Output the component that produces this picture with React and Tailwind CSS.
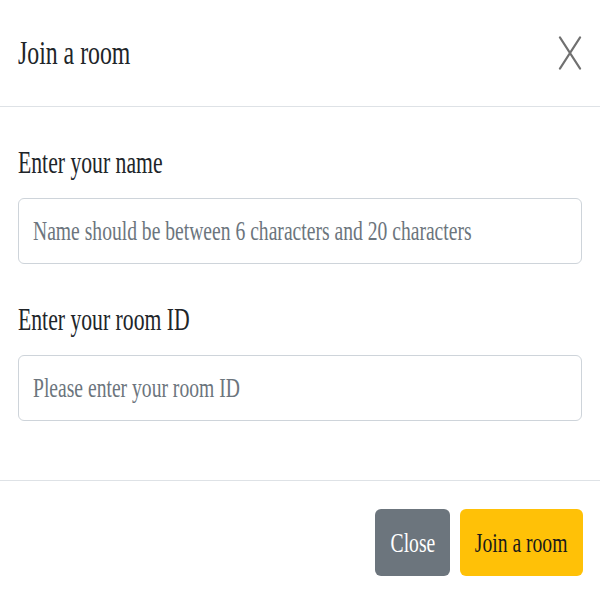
import React from "react";

// text in the shot is squeezed sideways, so every label is narrowed with scale-x
const Narrow = ({ children }) => (
  <span className="inline-block whitespace-nowrap origin-left scale-x-[0.7]">{children}</span>
);

const Field = ({ label, placeholder }) => (
  <div className="flex flex-col">
    <label className="h-[42px] flex items-center text-[31px] text-[#212529]">
      <Narrow>{label}</Narrow>
    </label>
    <div className="mt-[14px] h-[66px] rounded-[6px] border border-[#ced4da] bg-white px-[14px] flex items-center overflow-hidden">
      <input
        type="text"
        placeholder={placeholder}
        className="w-[143%] shrink-0 origin-left scale-x-[0.7] bg-transparent font-['Liberation_Serif',serif] text-[28px] text-[#212529] outline-none placeholder:text-[#6c757d]"
      />
    </div>
  </div>
);

const App = () => {
  return (
    <div className="w-[600px] h-[600px] bg-white flex flex-col font-['Liberation_Serif',serif]">
      <div className="h-[107px] shrink-0 border-b border-[#dee2e6] px-[18px] flex items-center justify-between">
        <h5 className="text-[34px] text-[#212529] leading-none">
          <Narrow>Join a room</Narrow>
        </h5>
        <button className="w-[24px] h-[34px] flex items-center justify-center">
          <svg width="24" height="34" viewBox="0 0 24 34" fill="none">
            <path d="M2 1.5 L22 32.5 M22 1.5 L2 32.5" stroke="#707070" strokeWidth="2.3" strokeLinecap="round" />
          </svg>
        </button>
      </div>

      <div className="flex-1 px-[18px] pt-[35px] flex flex-col gap-[35px]">
        <Field label="Enter your name" placeholder="Name should be between 6 characters and 20 characters" />
        <Field label="Enter your room ID" placeholder="Please enter your room ID" />
      </div>

      <div className="h-[120px] shrink-0 border-t border-[#dee2e6] px-[17px] flex items-start justify-end gap-[10px] pt-[28px]">
        <button className="w-[75px] h-[67px] rounded-[6px] bg-[#6c757d] text-white text-[28px] flex items-center justify-center overflow-hidden">
          <span className="inline-block whitespace-nowrap scale-x-[0.7]">Close</span>
        </button>
        <button className="w-[123px] h-[67px] rounded-[6px] bg-[#ffc107] text-[#1a1a1a] text-[28px] flex items-center justify-center overflow-hidden">
          <span className="inline-block whitespace-nowrap scale-x-[0.7]">Join a room</span>
        </button>
      </div>
    </div>
  );
};

export default App;
